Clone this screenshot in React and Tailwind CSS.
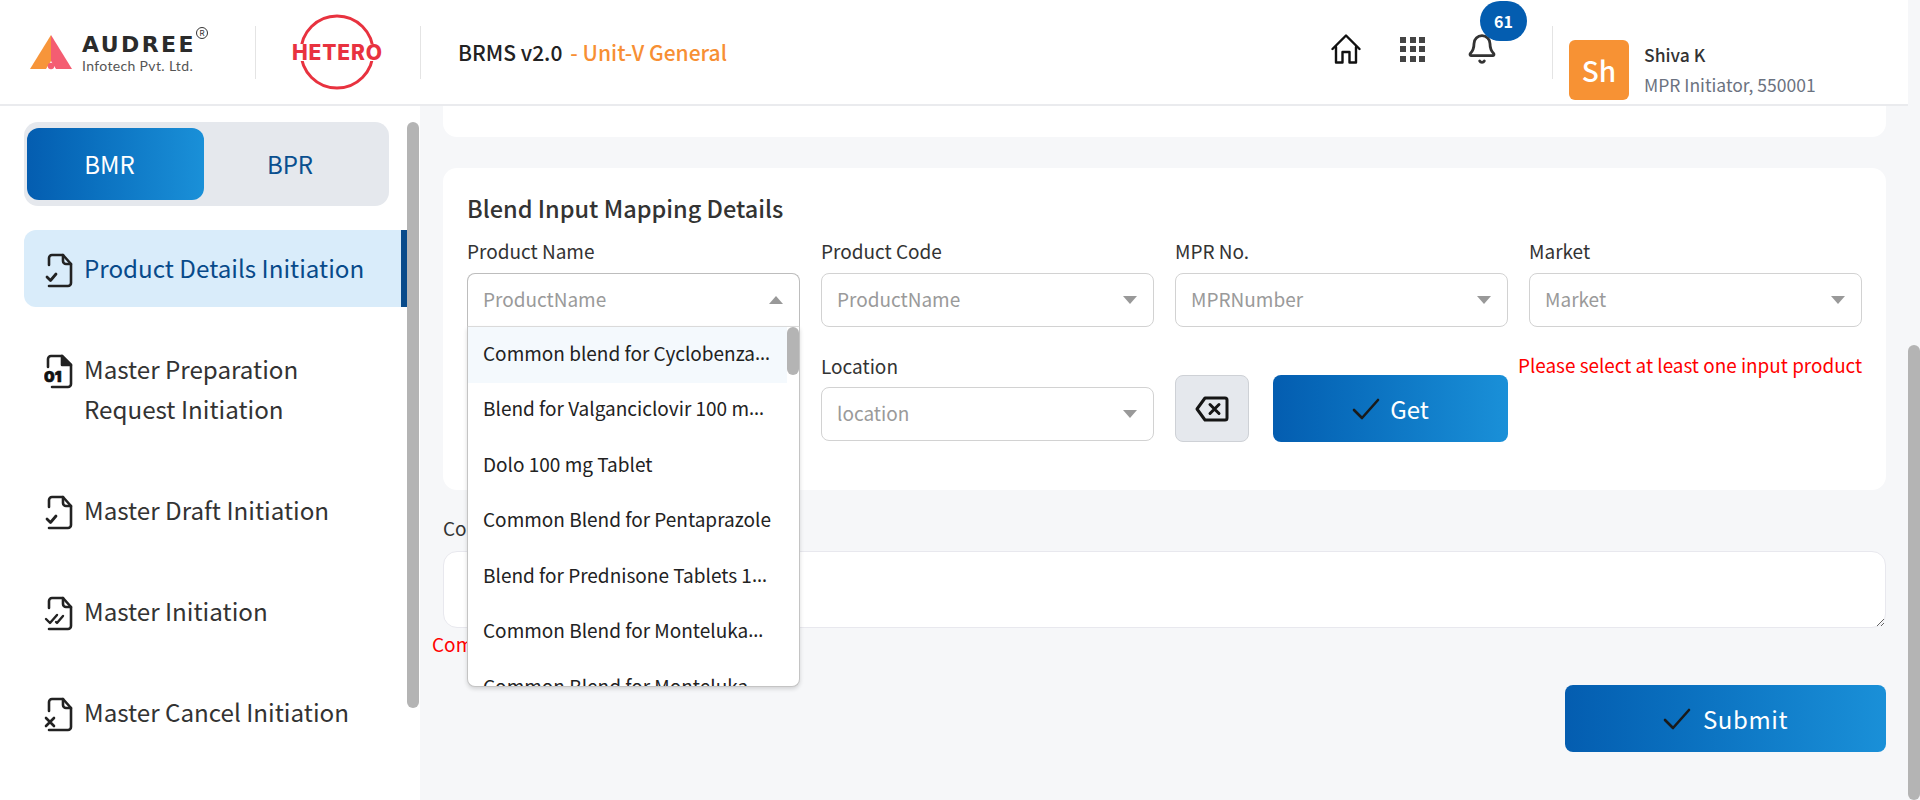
import React from 'react';
import { Bell } from 'lucide-react';

const menuItems = [
  { type: 'check', label: 'Product Details Initiation' },
  { type: 'binary', label: 'Master Preparation Request Initiation' },
  { type: 'check', label: 'Master Draft Initiation' },
  { type: 'double', label: 'Master Initiation' },
  { type: 'cancel', label: 'Master Cancel Initiation' },
];

// the list shows these clipped, dots are added where the text is cut
const options = [
  { text: 'Common blend for Cyclobenza', cut: true },
  { text: 'Blend for Valganciclovir 100 m', cut: true },
  { text: 'Dolo 100 mg Tablet' },
  { text: 'Common Blend for Pentaprazole' },
  { text: 'Blend for Prednisone Tablets 1', cut: true },
  { text: 'Common Blend for Monteluka', cut: true },
  { text: 'Common Blend for Monteluka', cut: true },
];

const FileIcon = ({ type }) => (
  <svg width="30" height="36" viewBox="0 0 30 36" fill="none" stroke="#222" strokeWidth="2.6" strokeLinecap="round" strokeLinejoin="round" className="shrink-0">
    {type === 'binary' ? (
      <>
        <path d="M4 14V6a3 3 0 0 1 3-3h11l9 9v19a3 3 0 0 1-3 3H8" />
        <path d="M18 3v9h9z" fill="#222" />
        <text x="0" y="29" fontSize="15" fontWeight="900" fill="#111" stroke="#111" strokeWidth="0.6" fontFamily="Inter, sans-serif">01</text>
      </>
    ) : (
      <>
        <path d={type === 'cancel' ? 'M5 15V6a3 3 0 0 1 3-3h11l8 9v19a3 3 0 0 1-3 3H5' : 'M5 13V6a3 3 0 0 1 3-3h11l8 9v19a3 3 0 0 1-3 3H5'} />
        <path d="M19 3v6a3 3 0 0 0 3 3h5" />
        {type === 'check' && <path d="M3 25l3.5 3.5L12 22" strokeWidth="2.8" />}
        {type === 'double' && <path d="M2 24l4 4 7-8M12 27l1 1 6-7" strokeWidth="2.4" />}
        {type === 'cancel' && <path d="M2 22l8 8M10 22l-8 8" strokeWidth="2.6" />}
      </>
    )}
  </svg>
);

const Caret = ({ up }) => (
  <svg width="14" height="8" viewBox="0 0 14 8" className="shrink-0 fill-[#999]">
    <path d={up ? 'M7 0l7 8H0z' : 'M0 0h14L7 8z'} />
  </svg>
);

const Check = ({ size }) => (
  <svg width={size} height={size} viewBox="0 0 28 28" fill="none" stroke="#1a1a1a" strokeWidth="2.6" strokeLinecap="round" strokeLinejoin="round">
    <path d="M2 15l8 8L26 5" />
  </svg>
);

const Select = ({ value, open }) => (
  <div className={`flex h-[54px] items-center justify-between border bg-white pl-[15px] pr-[16px] text-[19px] text-[#9a9a9a] ${open ? 'rounded-t-[8px] border-[#bdbdbd] border-b-[#dedede]' : 'rounded-[8px] border-[#d2d2d2]'}`}>
    <span className="pb-[2px]">{value}</span>
    <Caret up={open} />
  </div>
);

const Field = ({ label, value }) => (
  <div>
    <div className="mb-[11px] text-[19px] leading-[22px] text-[#333]">{label}</div>
    <Select value={value} />
  </div>
);

const Header = () => (
  <header className="flex h-[106px] shrink-0 items-center border-b-2 border-[#eaebee] bg-white">
    <div className="flex w-[255px] shrink-0 items-center pl-[30px]">
      <svg width="42" height="35" viewBox="0 0 42 35" className="shrink-0">
        <path d="M21 0L0 34h16l5-8z" fill="#f7953a" />
        <path d="M21 0l21 34H26l-5-8z" fill="#f45d72" />
        <circle cx="21" cy="31" r="3.2" fill="#f45d72" />
      </svg>
      <div className="relative ml-[10px] w-[130px] pt-[2px]">
        <div className="font-['DejaVu_Sans',sans-serif] text-[22px] font-bold leading-[24px] tracking-[2.4px] text-[#2b2b2b]">AUDREE</div>
        <div className="mt-[1px] font-['Lato',sans-serif] text-[14px] leading-[16px] tracking-[0.35px] text-[#555]">Infotech Pvt. Ltd.</div>
        <span className="absolute left-[114px] top-[-4px] flex h-[12px] w-[12px] items-center justify-center rounded-full border border-[#333] font-['Inter',sans-serif] text-[8px] leading-none text-[#333]">R</span>
      </div>
    </div>
    <div className="h-[53px] w-px shrink-0 bg-[#e4e4e4]" />
    <div className="flex w-[164px] shrink-0 justify-center">
      <svg width="94" height="78" viewBox="0 0 94 78">
        <circle cx="46" cy="39" r="36" fill="none" stroke="#e8323f" strokeWidth="3" />
        <rect x="0" y="31" width="94" height="17" fill="#fff" />
        <text x="1" y="47" fontFamily="Inter, sans-serif" fontWeight="800" fontSize="21" fill="#e8323f" textLength="90">HETERO</text>
      </svg>
    </div>
    <div className="h-[53px] w-px shrink-0 bg-[#e4e4e4]" />
    <div className="ml-[37px] mt-[1px] flex flex-1 items-center text-[21px] font-medium">
      <span className="text-[#222]">BRMS v2.0</span>
      <span className="ml-[8px] text-[#f78f34]">- Unit-V General</span>
    </div>
    <div className="-mt-[6px] flex items-center">
      <svg width="30" height="30" viewBox="0 0 30 30" fill="none" stroke="#111" strokeWidth="2.4" strokeLinejoin="round" strokeLinecap="round">
        <path d="M1.5 15L15 1.5 28.5 15" />
        <path d="M5 13v15.5h6.5V18h7v10.5H25V13" />
      </svg>
      <div className="ml-[39px] grid grid-cols-3 gap-[3.5px]">
        {Array.from({ length: 9 }).map((_, i) => (
          <span key={i} className="h-[6px] w-[6px] bg-[#444]" />
        ))}
      </div>
      <div className="relative ml-[41px] mr-[54px]">
        <Bell size={32} strokeWidth={2.1} className="block text-[#333]" />
        <span className="absolute left-[14px] top-[-32px] flex h-[40px] w-[47px] items-center justify-center rounded-full bg-[#045db0] text-[16px] font-bold text-white">61</span>
      </div>
    </div>
    <div className="h-[53px] w-px shrink-0 bg-[#e4e4e4]" />
    <div className="ml-[16px] mt-[36px] flex h-[60px] w-[339px] items-start">
      <div className="flex h-[60px] w-[60px] shrink-0 items-center justify-center rounded-[6px] bg-[#f79234] text-[28px] font-medium text-white">Sh</div>
      <div className="ml-[15px] pt-[1px] text-[17.5px] leading-[24px]">
        <div className="mt-[2px] font-medium text-[#333]">Shiva K</div>
        <div className="mt-[6px] text-[#6b7280]">MPR Initiator, 550001</div>
      </div>
    </div>
  </header>
);

const Sidebar = () => (
  <aside className="flex w-[420px] shrink-0 bg-white">
    <div className="w-[407px] pl-[24px] pt-[16px]">
      <div className="flex h-[84px] w-[365px] rounded-[14px] bg-[#e5e8ed] py-[6px] pl-[3px] text-[24px]">
        <div className="flex w-[177px] items-center justify-center rounded-[12px] bg-gradient-to-r from-[#045db0] to-[#1a90d8] pr-[12px] text-white">BMR</div>
        <div className="flex flex-1 items-center justify-center pr-[13px] text-[#0a4f8f]">BPR</div>
      </div>
      <nav className="mt-[24px] flex flex-col gap-[24px] text-[24.2px] leading-[40px] text-[#333]">
        {menuItems.map((item, i) => (
          <div
            key={i}
            className={`flex gap-[10px] pl-[20px] ${i === 1 ? 'h-[118px] pt-[18px]' : i === 0 ? 'h-[77px] pt-[18px]' : 'h-[77px] pt-[17px]'} ${i === 0 ? 'rounded-l-[12px] border-r-[6px] border-[#084a8a] bg-[#d9ecfa] text-[#084a8a]' : ''}`}
          >
            <div className="pt-[4px]">
              <FileIcon type={item.type} />
            </div>
            <div className="w-[285px]">{item.label}</div>
          </div>
        ))}
      </nav>
    </div>
    <div className="w-[12px] pt-[16px]">
      <div className="h-[586px] rounded-full bg-[#b4b4b4]" />
    </div>
  </aside>
);

const Dropdown = () => (
  <div className="absolute left-0 right-0 top-[87px] z-10 flex h-[360px] overflow-hidden rounded-b-[8px] border border-t-0 border-[#c4c4c4] bg-white shadow-[0_2px_4px_rgba(0,0,0,0.15)]">
    <div className="min-w-0 flex-1">
      {options.map((option, i) => (
        <div key={i} className={`flex h-[55.5px] items-center whitespace-nowrap px-[15px] pb-[4px] text-[19px] text-[#222] ${i === 0 ? 'bg-[#f4f9fd]' : ''}`}>
          {option.text}
          {option.cut && <span className="font-['Noto_Sans',sans-serif]">…</span>}
        </div>
      ))}
    </div>
    <div className="w-[12px] shrink-0">
      <div className="h-[48px] rounded-full bg-[#b4b4b4]" />
    </div>
  </div>
);

const Main = () => (
  <main className="flex-1 pl-[23px] pr-[22px]">
    <div className="h-[31px] rounded-b-[14px] bg-white" />
    <section className="mt-[31px] h-[322px] rounded-[14px] bg-white px-[24px] pt-[24px]">
      <h2 className="text-[23.5px] font-medium leading-[32px] text-[#333]">Blend Input Mapping Details</h2>
      <div className="mt-[16px] grid grid-cols-4 gap-x-[21px] gap-y-[28px]">
        <div className="relative">
          <div className="mb-[11px] text-[19px] leading-[22px] text-[#333]">Product Name</div>
          <Select value="ProductName" open />
          <Dropdown />
        </div>
        <Field label="Product Code" value="ProductName" />
        <Field label="MPR No." value="MPRNumber" />
        <Field label="Market" value="Market" />
        <div />
        <div>
          <div className="mb-[10px] text-[19px] leading-[22px] text-[#333]">Location</div>
          <Select value="location" />
        </div>
        <div className="flex gap-[24px] pt-[20px]">
          <button className="flex h-[67px] w-[74px] items-center justify-center rounded-[8px] border border-[#ced1d6] bg-[#e5e8ed]">
            <svg width="34" height="26" viewBox="0 0 34 26" fill="none" stroke="#151515" strokeWidth="3" strokeLinejoin="round" strokeLinecap="round">
              <path d="M10 2h20a2 2 0 0 1 2 2v18a2 2 0 0 1-2 2H10L2 13z" />
              <path d="M15 8.5l9 9M24 8.5l-9 9" />
            </svg>
          </button>
          <button className="flex h-[67px] flex-1 items-center justify-center gap-[10px] rounded-[8px] bg-gradient-to-r from-[#045db0] to-[#1a90d8] text-[24px] text-white">
            <Check size={28} />
            Get
          </button>
        </div>
        <div className="-ml-[11px] -mt-[1px] whitespace-nowrap text-right text-[18.9px] leading-[22px] text-[#ff0000]">Please select at least one input product</div>
      </div>
    </section>
    <div className="mt-[27px] text-[19px] leading-[22px] text-[#333]">Comments</div>
    <textarea className="mt-[12px] block h-[77px] w-full rounded-[14px] border border-[#e8e8ee] bg-white" />
    <div className="-ml-[11px] mt-[5px] text-[19px] leading-[22px] text-[#ff0000]">Comments is required</div>
    <button className="ml-auto mt-[30px] flex h-[67px] w-[321px] items-center justify-center gap-[12px] rounded-[8px] bg-gradient-to-r from-[#045db0] to-[#1a90d8] text-[24px] tracking-[0.6px] text-white">
      <Check size={28} />
      Submit
    </button>
  </main>
);

const App = () => {
  return (
    <div className="flex h-[800px] overflow-hidden bg-[#f6f7f9] font-['Noto_Sans_CJK_KR','Noto_Sans',sans-serif]">
      <div className="flex w-[1908px] flex-col">
        <Header />
        <div className="flex min-h-0 flex-1">
          <Sidebar />
          <Main />
        </div>
      </div>
      <div className="w-[12px] pt-[345px]">
        <div className="h-[455px] rounded-full bg-[#b4b4b4]" />
      </div>
    </div>
  );
};

export default App;
